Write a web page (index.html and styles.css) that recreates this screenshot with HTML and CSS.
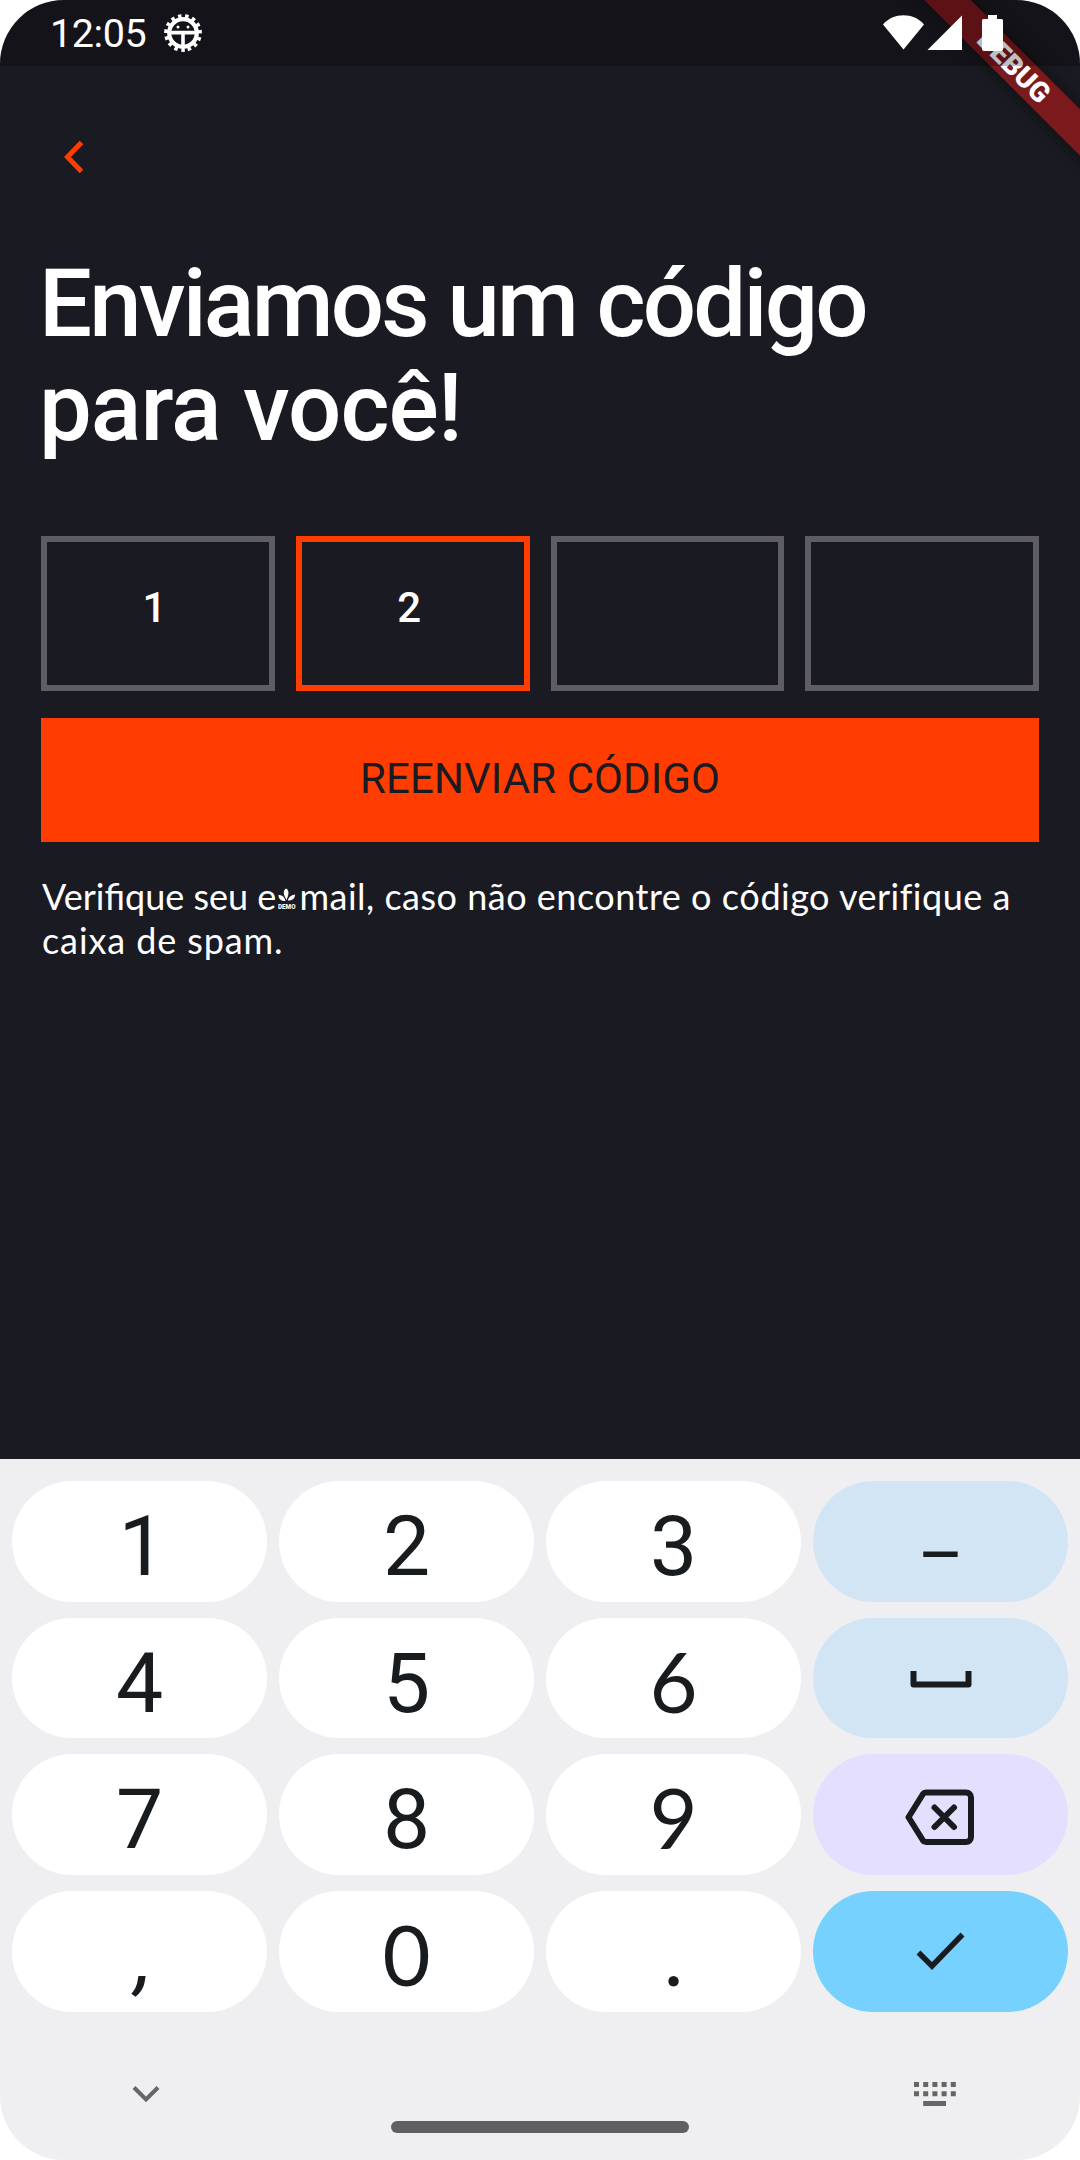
FILE: index.html
```html
<!DOCTYPE html>
<html lang="pt-BR">
<head>
<meta charset="utf-8">
<title>Verificação</title>
<link rel="stylesheet" href="styles.css">
</head>
<body>
<div class="screen">
  <header class="status">
    <span class="clock">12:05</span>
    <svg class="bug" width="40" height="40" viewBox="-20 -20 40 40">
      <circle r="16.6" fill="none" stroke="#fff" stroke-width="4.6" stroke-dasharray="3.4 3.553" transform="rotate(84)"/>
      <circle r="13.8" fill="none" stroke="#fff" stroke-width="4.2"/>
      <path d="M-13-.4H13M0 0V14" stroke="#fff" stroke-width="3.6"/>
      <circle cx="-5" cy="-6" r="1.5" fill="#fff"/><circle cx="5" cy="-6" r="1.5" fill="#fff"/>
    </svg>
    <svg class="signals" width="122" height="38" viewBox="882 14 122 38" fill="#fff">
      <path d="M883 24.5C893.500 12.300 913.500 12.300 924 24.500L903.500 49.500Z"/>
      <path d="M962 15.500V50H927.500Z"/>
      <path d="M988 15h9v4h4.500a1.500 1.500 0 0 1 1.500 1.500V49a2 2 0 0 1-2 2h-17a2 2 0 0 1-2-2V20.500a1.500 1.500 0 0 1 1.500-1.500h4.500z"/>
    </svg>
  </header>
  <div class="ribbon">DEBUG</div>

  <main class="content">
    <svg class="back" width="24" height="36" viewBox="0 0 24 36"><path d="M19.500 3.500 5.500 18l14 14.500" fill="none" stroke="#ff3d00" stroke-width="5"/></svg>
    <h1 class="title"><span class="title-first">Enviamos um código</span><br>para você!</h1>
    <div class="code">
      <div class="cell">1</div>
      <div class="cell active">2</div>
      <div class="cell"></div>
      <div class="cell"></div>
    </div>
    <button class="resend">REENVIAR CÓDIGO</button>
    <p class="hint">Verifique seu e<svg class="demo" width="18" height="22" viewBox="0 0 18 22" fill="#fff"><path d="M8.500 12C4.500 5 5.500 2 8 .5c3.500 2 3 6 .5 11.500zM7.500 13C3 13 .5 11 .5 7c4 0 6 2 7 6zM9.800 12.500c.7-3.500 3-5.500 7.200-6 0 4-2.500 6-7.200 6z"/><text x="0" y="21" font-family="Roboto" font-weight="900" font-size="7" textLength="17.500" lengthAdjust="spacingAndGlyphs">DEMO</text></svg><span class="hint-mid">mail, caso não encontre o c<span class="fallback">ó</span>digo verifique a</span><br><span class="hint-end">caixa de spam.</span></p>
  </main>

  <section class="keyboard">
    <div class="keys">
      <div class="key one">1</div><div class="key">2</div><div class="key">3</div>
      <div class="key soft wide-glyph dash">–</div>
      <div class="key">4</div><div class="key">5</div><div class="key wide-glyph">6</div>
      <div class="key soft icon"><svg width="64" height="20" viewBox="0 0 64 20"><path d="M4.500 2v13.500h55V2" fill="none" stroke="#191c1e" stroke-width="6" stroke-linejoin="round"/></svg></div>
      <div class="key">7</div><div class="key">8</div><div class="key wide-glyph">9</div>
      <div class="key erase icon"><svg width="72" height="58" viewBox="0 0 72 58" fill="none" stroke="#191c1e" stroke-width="6" stroke-linejoin="round"><path d="M21 4.500H61a5 5 0 0 1 5 5v39.500a5 5 0 0 1-5 5H21q-2 0-3-1.500L3.500 29.250 18 6q1-1.500 3-1.500z"/><path d="M29.500 19.500l19.500 19.500M49 19.500L29.500 39" stroke-linecap="round"/></svg></div>
      <div class="key comma">,</div><div class="key wide-glyph">0</div><div class="key wide-glyph">.</div>
      <div class="key enter icon"><svg width="50" height="40" viewBox="0 0 50 40"><path d="M2.500 20.500 16 34 46.500 2.500" fill="none" stroke="#191c1e" stroke-width="5.500"/></svg></div>
    </div>
    <footer class="nav">
      <svg class="nav-hide" width="30" height="20" viewBox="0 0 30 20"><path d="M3 3.500 15 15.500 27 3.500" fill="none" stroke="#666" stroke-width="4"/></svg>
      <div class="home"></div>
      <svg class="nav-switch" width="42" height="24" viewBox="0 0 42 24" stroke="#666" stroke-width="5"><path d="M0 2.500H42M0 11.700H42" stroke-dasharray="5 4.200"/><path d="M9.200 21.500H32"/></svg>
    </footer>
  </section>
</div>
</body>
</html>
```

FILE: styles.css
```css
* { box-sizing: border-box; }
body { margin: 0; background: #fff; }
.screen {
  position: relative;
  display: flex;
  flex-direction: column;
  width: 1080px;
  height: 2160px;
  border-radius: 64px;
  overflow: hidden;
  background: linear-gradient(#1a1a22 1459px, #efeff1 1459px);
  color: #fff;
  font-family: Roboto, sans-serif;
}

.status {
  position: relative;
  z-index: 2;
  display: flex;
  align-items: center;
  height: 66px;
  flex: none;
  padding: 0 76px 0 50px;
  background: rgba(0, 0, 0, .25);
}
.clock { font-size: 39.5px; line-height: 66px; padding-top: 2px; letter-spacing: -.4px; }
.bug { margin-left: 17px; }
.signals { margin-left: auto; }

.ribbon {
  position: absolute;
  z-index: 1;
  left: 814px;
  top: 49.500px;
  width: 400px;
  height: 33px;
  transform: rotate(45deg);
  background: #7b191c;
  box-shadow: 0 0 16px rgba(0, 0, 0, .5);
  text-align: center;
  font-size: 28px;
  font-weight: 900;
  line-height: 33px;
}

.content {
  height: 1393px;
  flex: none;
  padding: 73px 41px 0;
}
.back { display: block; margin-left: 21px; }
.title {
  margin: 77px 0 76px -2px;
  font-size: 94px;
  font-weight: 500;
  line-height: 104px;
  letter-spacing: -1px;
}
.title-first { letter-spacing: -2.8px; }
.code { display: grid; grid-template-columns: repeat(4, 1fr); gap: 21px; }
.cell {
  display: flex;
  align-items: center;
  justify-content: center;
  height: 155px;
  padding: 0 7px 12px 0;
  border: 6px solid #5e5d63;
  font-size: 42px;
  font-weight: 500;
}
.cell.active { border-color: #ff3d00; }
.resend {
  display: block;
  width: 100%;
  height: 124px;
  margin: 27px 0 32px;
  padding: 0 0 4px;
  border: 0;
  background: #ff3d00;
  color: #1a1a22;
  font: 400 42px Roboto, sans-serif;
  letter-spacing: .1px;
}
.hint {
  margin: 0 0 0 1px;
  font: 400 36px/44px Lato, sans-serif;
  white-space: nowrap;
}
.demo { margin: 0 3px 0 2px; vertical-align: 0; }
.hint-mid { letter-spacing: .5px; }
.hint-end { letter-spacing: .9px; }
.fallback { font-family: Roboto, sans-serif; line-height: 1; }

.keyboard {
  flex: 1;
  padding: 22px 12px 0;
  color: #191c1e;
}
.keys { display: grid; grid-template-columns: repeat(4, 1fr); grid-auto-rows: 120.700px; gap: 16px 12px; }
.key {
  display: flex;
  align-items: center;
  justify-content: center;
  border-radius: 61px;
  background: #fff;
  padding-top: 11px;
  font-size: 84px;
  line-height: 100px;
}
.wide-glyph { font-family: Lato, sans-serif; font-size: 83px; padding-top: 5px; }
.one { padding-left: 5px; }
.dash { padding-top: 9px; font-size: 86px; }
.comma { font-style: italic; padding-left: 9px; }
.soft { background: #d2e5f4; }
.erase { background: #e4deff; }
.enter { background: #77d1ff; }
.icon { padding-top: 2px; }
.erase.icon { padding-top: 4px; }

.nav {
  display: grid;
  grid-template-columns: 1fr 297px 1fr;
  align-items: center;
  height: 148px;
}
.nav-hide { margin: 16px 0 0 119px; }
.nav-switch { margin: 17px 0 0 225px; }
.home { height: 12px; margin: 82px 0 0 -1px; border-radius: 6px; background: #606060; }
```
